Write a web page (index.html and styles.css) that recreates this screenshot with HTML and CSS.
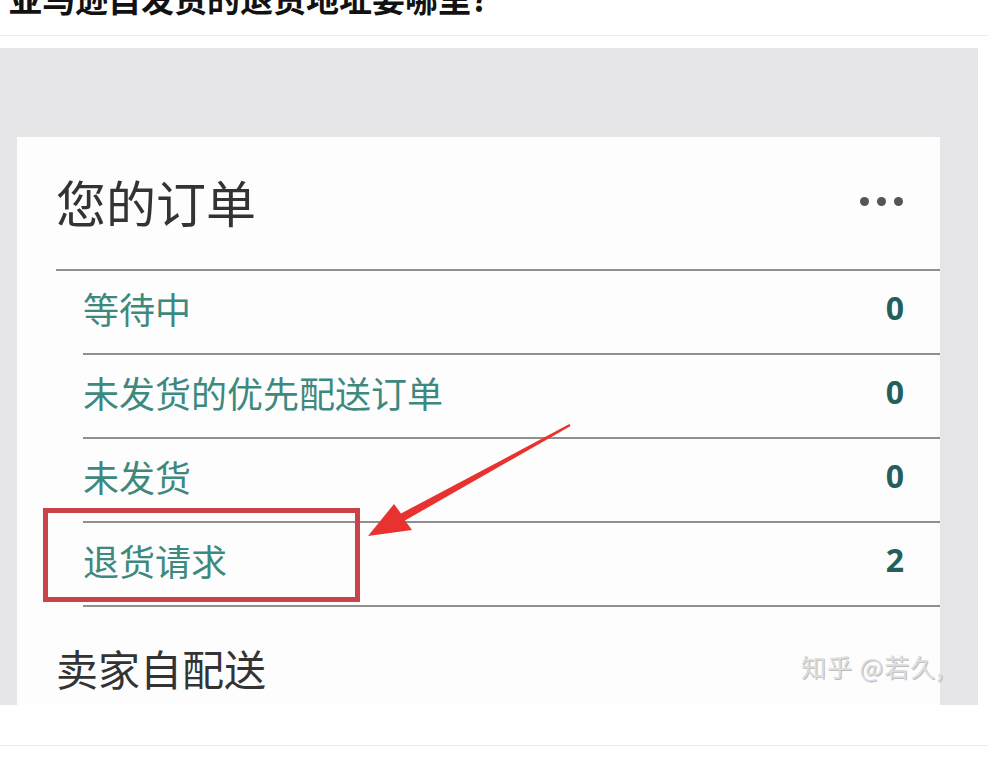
FILE: index.html
```html
<!DOCTYPE html>
<html lang="zh-CN">
<head>
    <meta charset="UTF-8">
    <meta name="viewport" content="width=device-width, initial-scale=1.0">
    <title>亚马逊自发货的退货地址要哪里?</title>
    <link rel="stylesheet" href="styles.css">
</head>
<body>
    <header class="question">
        <h1 class="question-title">亚马逊自发货的退货地址要哪里?</h1>
    </header>

    <figure class="shot">
        <section class="orders-card">
            <div class="card-head">
                <h2 class="card-title">您的订单</h2>
                <span class="more"><i></i><i></i><i></i></span>
            </div>
            <ul class="order-list">
                <li class="order-row"><span class="order-label">等待中</span><span class="order-count">0</span></li>
                <li class="order-row"><span class="order-label">未发货的优先配送订单</span><span class="order-count">0</span></li>
                <li class="order-row"><span class="order-label">未发货</span><span class="order-count">0</span></li>
                <li class="order-row"><span class="order-label">退货请求</span><span class="order-count">2</span></li>
            </ul>
            <div class="self-ship">卖家自配送</div>
        </section>

        <div class="mark-box"></div>
        <svg class="mark-arrow" viewBox="0 0 220 125" width="220" height="125">
            <polygon points="210.6,7.9 45,102.5 52,112 8,118 34,86 41,95.5 209.4,6.1" fill="#e8322f"/>
        </svg>
        <span class="watermark">知乎 @若久,</span>
    </figure>

    <div class="divider"></div>
</body>
</html>
```

FILE: styles.css
```css
* {
    box-sizing: border-box;
}
body {
    margin: 0;
    background: #fff;
    color: #121212;
    font-family: "Noto Sans CJK SC", sans-serif;
    overflow: hidden;
}
.question {
    height: 36px;
    overflow: hidden;
    padding-left: 9px;
    border-bottom: 1px solid #ececec;
}
.question-title {
    margin: -22px 0 0;
    font-size: 33px;
    line-height: 40px;
    font-weight: 700;
    white-space: nowrap;
}
.shot {
    position: relative;
    width: 978px;
    height: 657px;
    margin: 12px 0 0;
    padding: 89px 38px 0 17px;
    background: #e6e5e7;
}
.orders-card {
    height: 100%;
    background: #fdfdfd;
    overflow: hidden;
}
.card-head {
    height: 132px;
    display: flex;
    align-items: center;
    justify-content: space-between;
    padding: 0 37px 4px 39px;
}
.card-title {
    margin: 0;
    font-size: 50px;
    line-height: 1;
    font-weight: 400;
    color: #333;
}
.more {
    display: flex;
    gap: 8px;
}
.more i {
    width: 9px;
    height: 9px;
    border-radius: 50%;
    background: #555;
}
.order-list {
    list-style: none;
    margin: 0 0 0 39px;
    padding: 0;
    border-top: 2px solid #8f8f8f;
}
.order-row {
    height: 84px;
    margin-left: 27px;
    padding: 0 36px 8px 0;
    display: flex;
    align-items: center;
    justify-content: space-between;
    border-bottom: 2px solid #8f8f8f;
}
.order-label {
    font-size: 36px;
    line-height: 1;
    color: #3d897d;
}
.order-count {
    font-family: "Open Sans", sans-serif;
    font-size: 32px;
    font-weight: 700;
    line-height: 1;
    color: #245f5e;
}
.self-ship {
    margin-top: 40px;
    padding-left: 39px;
    font-size: 42px;
    line-height: 1;
    color: #333;
}
.mark-box {
    position: absolute;
    left: 43px;
    top: 460px;
    width: 317px;
    height: 94px;
    border: 5px solid #c94347;
}
.mark-arrow {
    position: absolute;
    left: 360px;
    top: 370px;
}
.watermark {
    position: absolute;
    left: 801px;
    top: 606px;
    font-size: 25px;
    line-height: 1;
    letter-spacing: 1px;
    color: #dedede;
    text-shadow: 1px 1px 0 #bdbdbd;
    white-space: nowrap;
}
.divider {
    height: 1px;
    margin-top: 40px;
    background: #ececec;
}
```
